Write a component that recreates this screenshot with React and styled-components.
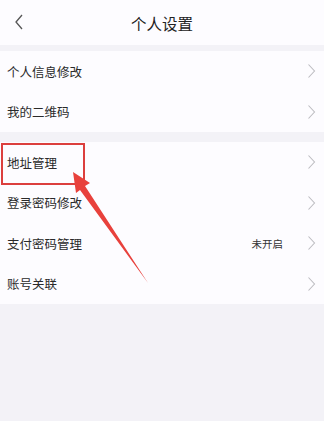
import React from 'react';
import styled, { createGlobalStyle } from 'styled-components';

const GlobalStyle = createGlobalStyle`
  html, body {
    margin: 0;
    padding: 0;
    background: #f3f2f7;
    font-family: "Noto Sans CJK SC", "Noto Sans", sans-serif;
  }
`;

const Page = styled.div`
  position: relative;
  width: 324px;
  height: 421px;
  background: #f3f2f7;
  overflow: hidden;
`;

const Header = styled.header`
  display: flex;
  align-items: center;
  justify-content: center;
  position: relative;
  height: 45px;
  background: #fdfcff;
  margin-bottom: 6px;
`;

const BackButton = styled.button`
  position: absolute;
  left: 13px;
  top: 13px;
  border: none;
  background: none;
  padding: 0;
  display: flex;
`;

const Title = styled.h1`
  margin: 0;
  font-size: 15.5px;
  font-weight: 400;
  color: #222;
`;

const Group = styled.ul`
  list-style: none;
  margin: 0 0 ${p => p.gap || 0}px;
  padding: 0;
  background: #fdfcff;
`;

const Row = styled.li`
  display: flex;
  align-items: center;
  height: 40.5px;
  padding: 0 8px 0 7px;
`;

const Label = styled.span`
  flex: 1;
  font-size: 12.5px;
  color: #2a2a2a;
`;

const Value = styled.span`
  font-size: 10.5px;
  color: #333;
  margin-right: 24px;
`;

const Highlight = styled.div`
  position: absolute;
  left: 1px;
  top: 143px;
  width: 80px;
  height: 38px;
  border: 2px solid #dc3f3d;
`;

const Arrow = styled.svg`
  position: absolute;
  left: 0;
  top: 0;
  pointer-events: none;
`;

const Chevron = () => (
  <svg width="9" height="16" viewBox="0 0 9 16">
    <path d="M1.5 1.5 L7.5 8 L1.5 14.5" fill="none" stroke="#bdbcc1" strokeWidth="1.1" />
  </svg>
);

const rows1 = [{ label: '个人信息修改' }, { label: '我的二维码' }];
const rows2 = [
  { label: '地址管理' },
  { label: '登录密码修改' },
  { label: '支付密码管理', value: '未开启' },
  { label: '账号关联' },
];

const App = () => (
  <Page>
    <GlobalStyle />
    <Header>
      <BackButton>
        <svg width="12" height="18" viewBox="0 0 12 18">
          <path d="M9 2 L3 9 L9 16" fill="none" stroke="#555" strokeWidth="1.3" />
        </svg>
      </BackButton>
      <Title>个人设置</Title>
    </Header>
    <Group gap={10}>
      {rows1.map(r => (
        <Row key={r.label}>
          <Label>{r.label}</Label>
          <Chevron />
        </Row>
      ))}
    </Group>
    <Group>
      {rows2.map(r => (
        <Row key={r.label}>
          <Label>{r.label}</Label>
          {r.value && <Value>{r.value}</Value>}
          <Chevron />
        </Row>
      ))}
    </Group>
    <Highlight />
    <Arrow width="324" height="421" viewBox="0 0 324 421">
      <polygon points="73,172 90,183 85,186 148,283 80,190 76,193" fill="#e8413c" />
    </Arrow>
  </Page>
);

export default App;
